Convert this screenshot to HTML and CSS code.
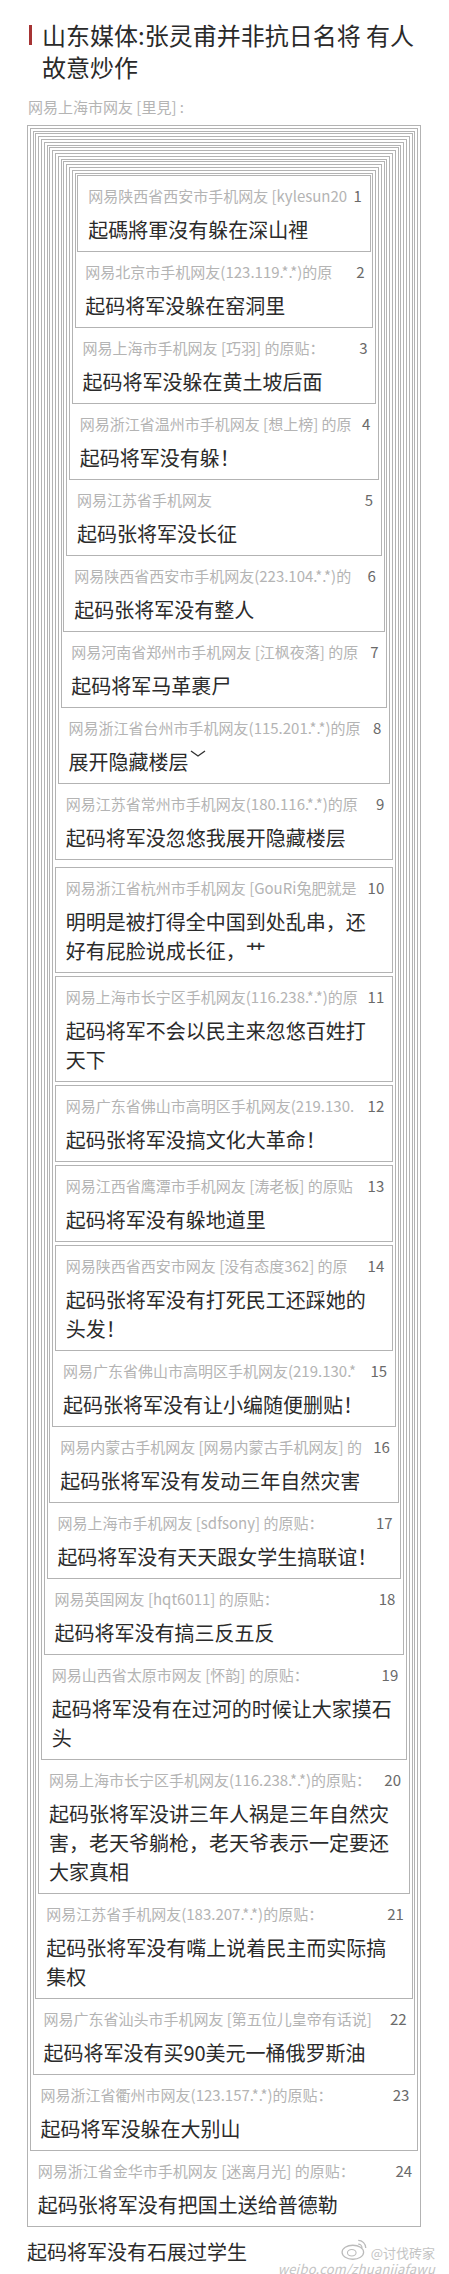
FILE: index.html
```html
<!DOCTYPE html>
<html lang="zh-CN">

<head>
    <meta charset="UTF-8">
    <meta name="viewport" content="width=device-width, initial-scale=1.0">
    <title>山东媒体:张灵甫并非抗日名将 有人故意炒作</title>
    <link rel="stylesheet" href="styles.css">
</head>

<body>
    <div class="page">

        <div class="title">
            <span class="title-bar"></span>
            <h1>山东媒体:张灵甫并非抗日名将 有人故意炒作</h1>
        </div>

        <div class="poster">网易上海市网友 [里見] :</div>

        <!-- 24 -->
        <div class="floor">
        <!-- 23 -->
        <div class="floor">
        <!-- 22 -->
        <div class="floor">
        <!-- 21 -->
        <div class="floor">
        <!-- 20 -->
        <div class="floor">
        <!-- 19 -->
        <div class="floor">
        <!-- 18 -->
        <div class="floor">
        <!-- 17 -->
        <div class="floor">
        <!-- 16 -->
        <div class="floor">
        <!-- 15 -->
        <div class="floor">

            <!-- 9 -->
            <div class="floor">
            <!-- 8 -->
            <div class="floor">
            <!-- 7 -->
            <div class="floor">
            <!-- 6 -->
            <div class="floor">
            <!-- 5 -->
            <div class="floor">
            <!-- 4 -->
            <div class="floor">
            <!-- 3 -->
            <div class="floor">
            <!-- 2 -->
            <div class="floor">
            <!-- 1 -->
            <div class="floor leaf">
                <div class="head"><span class="name">网易陕西省西安市手机网友 [kylesun20</span><span class="num">1</span></div>
                <div class="body">起碼將軍沒有躲在深山裡</div>
            </div>
                <div class="head"><span class="name">网易北京市手机网友(123.119.*.*)的原</span><span class="num">2</span></div>
                <div class="body">起码将军没躲在窑洞里</div>
            </div>
                <div class="head"><span class="name">网易上海市手机网友 [巧羽] 的原贴：</span><span class="num">3</span></div>
                <div class="body">起码将军没躲在黄土坡后面</div>
            </div>
                <div class="head"><span class="name">网易浙江省温州市手机网友 [想上榜] 的原</span><span class="num">4</span></div>
                <div class="body">起码将军没有躲！</div>
            </div>
                <div class="head"><span class="name">网易江苏省手机网友</span><span class="num">5</span></div>
                <div class="body">起码张将军没长征</div>
            </div>
                <div class="head"><span class="name">网易陕西省西安市手机网友(223.104.*.*)的</span><span class="num">6</span></div>
                <div class="body">起码张将军没有整人</div>
            </div>
                <div class="head"><span class="name">网易河南省郑州市手机网友 [江枫夜落] 的原</span><span class="num">7</span></div>
                <div class="body">起码将军马革裹尸</div>
            </div>
                <div class="head"><span class="name">网易浙江省台州市手机网友(115.201.*.*)的原</span><span class="num">8</span></div>
                <div class="body">展开隐藏楼层<svg class="chevron" width="16" height="8" viewBox="0 0 16 8"><polyline points="1,1 8,6 15,1" fill="none" stroke="#333" stroke-width="1.4"/></svg></div>
            </div>
                <div class="head"><span class="name">网易江苏省常州市手机网友(180.116.*.*)的原</span><span class="num">9</span></div>
                <div class="body">起码将军没忽悠我展开隐藏楼层</div>
            </div>

            <!-- 10 to 14, expanded floors -->
            <div class="floor leaf expanded">
                <div class="head"><span class="name">网易浙江省杭州市手机网友 [GouRi兔肥就是</span><span class="num">10</span></div>
                <div class="body">明明是被打得全中国到处乱串，还好有屁脸说成长征，艹</div>
            </div>
            <div class="floor leaf">
                <div class="head"><span class="name">网易上海市长宁区手机网友(116.238.*.*)的原</span><span class="num">11</span></div>
                <div class="body">起码将军不会以民主来忽悠百姓打天下</div>
            </div>
            <div class="floor leaf">
                <div class="head"><span class="name">网易广东省佛山市高明区手机网友(219.130.</span><span class="num">12</span></div>
                <div class="body">起码张将军没搞文化大革命！</div>
            </div>
            <div class="floor leaf">
                <div class="head"><span class="name">网易江西省鹰潭市手机网友 [涛老板] 的原贴</span><span class="num">13</span></div>
                <div class="body">起码将军没有躲地道里</div>
            </div>
            <div class="floor leaf">
                <div class="head"><span class="name">网易陕西省西安市网友 [没有态度362] 的原</span><span class="num">14</span></div>
                <div class="body">起码张将军没有打死民工还踩她的头发！</div>
            </div>

            <div class="head"><span class="name">网易广东省佛山市高明区手机网友(219.130.*</span><span class="num">15</span></div>
            <div class="body">起码张将军没有让小编随便删贴！</div>
        </div>
            <div class="head"><span class="name">网易内蒙古手机网友 [网易内蒙古手机网友] 的</span><span class="num">16</span></div>
            <div class="body">起码张将军没有发动三年自然灾害</div>
        </div>
            <div class="head"><span class="name">网易上海市手机网友 [sdfsony] 的原贴：</span><span class="num">17</span></div>
            <div class="body">起码将军没有天天跟女学生搞联谊！</div>
        </div>
            <div class="head"><span class="name">网易英国网友 [hqt6011] 的原贴：</span><span class="num">18</span></div>
            <div class="body">起码将军没有搞三反五反</div>
        </div>
            <div class="head"><span class="name">网易山西省太原市网友 [怀韵] 的原贴：</span><span class="num">19</span></div>
            <div class="body">起码将军没有在过河的时候让大家摸石头</div>
        </div>
            <div class="head"><span class="name">网易上海市长宁区手机网友(116.238.*.*)的原贴：</span><span class="num">20</span></div>
            <div class="body">起码张将军没讲三年人祸是三年自然灾害，老天爷躺枪，老天爷表示一定要还大家真相</div>
        </div>
            <div class="head"><span class="name">网易江苏省手机网友(183.207.*.*)的原贴：</span><span class="num">21</span></div>
            <div class="body">起码张将军没有嘴上说着民主而实际搞集权</div>
        </div>
            <div class="head"><span class="name">网易广东省汕头市手机网友 [第五位儿皇帝有话说]</span><span class="num">22</span></div>
            <div class="body">起码将军没有买90美元一桶俄罗斯油</div>
        </div>
            <div class="head"><span class="name">网易浙江省衢州市网友(123.157.*.*)的原贴：</span><span class="num">23</span></div>
            <div class="body">起码将军没躲在大别山</div>
        </div>
            <div class="head"><span class="name">网易浙江省金华市手机网友 [迷离月光] 的原贴：</span><span class="num">24</span></div>
            <div class="body">起码张将军没有把国土送给普德勒</div>
        </div>

        <div class="footer">
            <div class="reply">起码将军没有石展过学生</div>
            <div class="mark">
                <div class="mark-top">
                    <svg class="mark-logo" width="28" height="24" viewBox="0 0 26 22">
                        <ellipse cx="11" cy="14" rx="10" ry="6.5" fill="none" stroke="#bbb" stroke-width="1.2"/>
                        <ellipse cx="10" cy="14.5" rx="4" ry="3" fill="none" stroke="#bbb" stroke-width="1"/>
                        <path d="M16 3 A7 7 0 0 1 23 10" fill="none" stroke="#bbb" stroke-width="1.2"/>
                        <path d="M16 6.5 A3.5 3.5 0 0 1 19.5 10" fill="none" stroke="#bbb" stroke-width="1.1"/>
                    </svg>
                    <span>@讨伐砖家</span>
                </div>
                <div class="mark-url">weibo.com/zhuanjiafawu</div>
            </div>
        </div>

    </div>
</body>

</html>
```

FILE: styles.css
```css
body {
    margin: 0;
    background: #fff;
    font-family: "Noto Sans CJK SC", "Noto Sans", sans-serif;
    color: #2b2b2b;
}

.page {
    width: 449px;
    padding: 19px 28px 4px 27px;
    box-sizing: border-box;
}

.title {
    display: flex;
    align-items: flex-start;
}

.title-bar {
    flex: none;
    width: 3px;
    height: 20px;
    margin: 6px 10px 0 2px;
    background: #a63434;
}

.title h1 {
    margin: 0;
    font-size: 24px;
    font-weight: normal;
    line-height: 32px;
    color: #2a2a2a;
}

.poster {
    margin-top: 14px;
    font-size: 15px;
    line-height: 20px;
    color: #b4b4b4;
    padding-left: 1px;
}

/* each floor wraps the one it quotes */
.floor {
    border: 1px solid #b3b3b3;
    padding: 1.8px 1.8px 0;
    background: #fff;
}

.poster + .floor {
    margin-top: 8px;
}

.floor.leaf {
    padding-top: 0;
}

.floor + .floor {
    margin-top: 3px;
}

.floor + .floor.expanded {
    margin-top: 7px;
}

.head {
    display: flex;
    padding: 10px 6px 0 8px;
    font-size: 15px;
    line-height: 20px;
    height: 20px;
    white-space: nowrap;
}

.head .name {
    flex: 1;
    min-width: 0;
    overflow: hidden;
    color: #b4b4b4;
}

.head .num {
    flex: none;
    margin-left: 4px;
    color: #6a6a6a;
}

.body {
    padding: 9px 12px 7px 8px;
    font-size: 20px;
    line-height: 29px;
    color: #2b2b2b;
}

.chevron {
    vertical-align: 12px;
    margin-left: 1px;
}

.footer {
    display: flex;
    justify-content: space-between;
    align-items: flex-start;
    margin-top: 10px;
}

.reply {
    font-size: 20px;
    line-height: 29px;
    color: #2b2b2b;
}

.mark {
    display: flex;
    flex-direction: column;
    align-items: flex-end;
    margin-top: 0;
    margin-right: -14px;
    color: #c4c4c4;
    font-size: 13px;
}

.mark-top {
    display: flex;
    align-items: flex-end;
    gap: 2px;
    line-height: 16px;
}

.mark-url {
    line-height: 15px;
    font-style: italic;
    letter-spacing: 0.2px;
}
```
